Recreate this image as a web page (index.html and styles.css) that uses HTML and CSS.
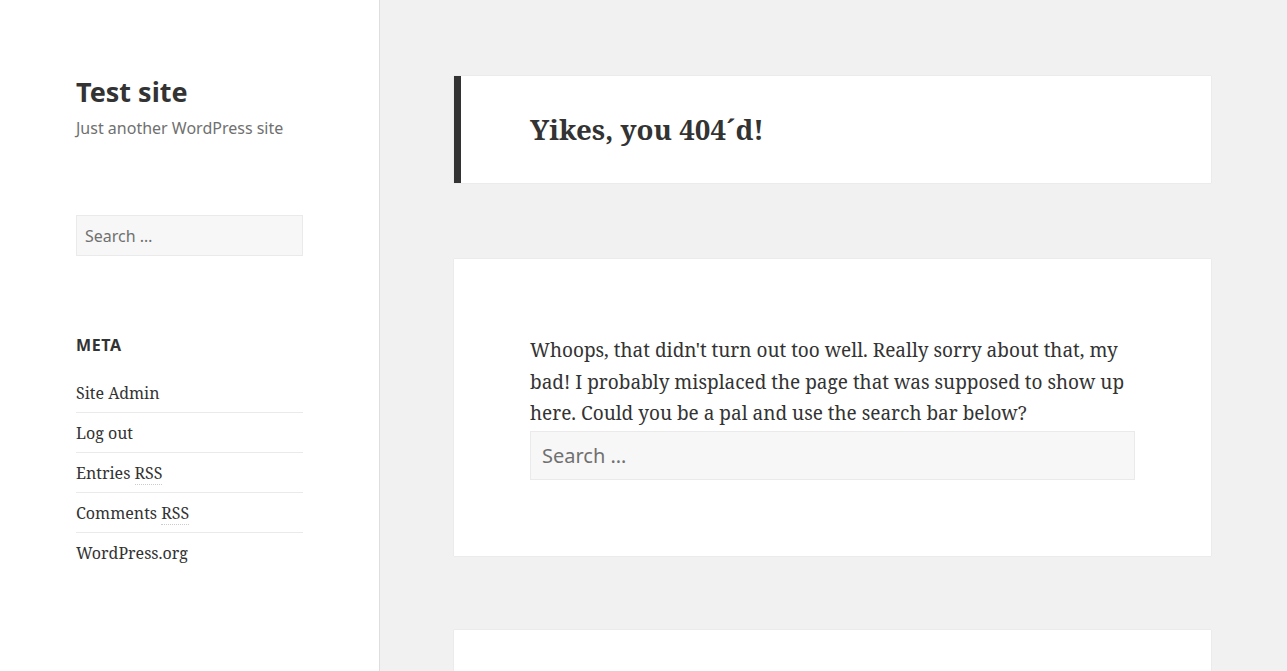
FILE: index.html
```html
<!DOCTYPE html>
<html lang="en">
  <head>
    <title>Page not found – Test site</title>
    <link rel="stylesheet" href="styles.css">
  </head>
  <body>
    <div class="page">

      <!-- Sidebar -->
      <div class="sidebar">
        <h1 class="site-title">Test site</h1>
        <p class="site-description">Just another WordPress site</p>

        <form class="widget widget-search">
          <input type="search" class="search-field" placeholder="Search …">
        </form>

        <div class="widget widget-meta">
          <h2 class="widget-title">Meta</h2>
          <ul class="meta-list">
            <li>Site Admin</li>
            <li>Log out</li>
            <li>Entries <abbr>RSS</abbr></li>
            <li>Comments <abbr>RSS</abbr></li>
            <li>WordPress.org</li>
          </ul>
        </div>
      </div>

      <!-- Main content -->
      <div class="main">
        <header class="page-header">
          <h1 class="page-title">Yikes, you 404´d!</h1>
        </header>

        <div class="page-content">
          <p>Whoops, that didn't turn out too well. Really sorry about that, my bad! I probably misplaced the page that was supposed to show up here. Could you be a pal and use the search bar below?</p>
          <form>
            <input type="search" class="search-field big" placeholder="Search …">
          </form>
        </div>

        <div class="page-content empty"></div>
      </div>

    </div>
  </body>
</html>
```

FILE: styles.css
```css
body { margin: 0; background: #f1f1f1; color: #333; font-family: "Noto Serif", "DejaVu Serif", serif; }

.page { display: flex; height: 671px; overflow: hidden; }

/* Sidebar */
.sidebar {
  width: 380px;
  flex-shrink: 0;
  box-sizing: border-box;
  background: #fff;
  border-right: 1px solid #dedede;
  padding: 72px 76px 0;
}

.site-title {
  margin: 0;
  font-family: "Noto Sans", sans-serif;
  font-size: 27px;
  line-height: 40px;
  font-weight: 700;
}

.site-description {
  margin: 4px 0 0;
  font-family: "Noto Sans", sans-serif;
  font-size: 16px;
  line-height: 24px;
  color: #707070;
}

.widget-search { margin-top: 75px; }

.search-field {
  display: block;
  width: 100%;
  box-sizing: border-box;
  height: 41px;
  padding: 0 8px;
  background: #f7f7f7;
  border: 1px solid #eaeaea;
  border-radius: 0;
  font-family: "Noto Sans", sans-serif;
  font-size: 16px;
  color: #333;
}
.search-field::placeholder { color: #707070; }

.widget-meta { margin-top: 77px; }

.widget-title {
  margin: 0 0 16px;
  font-family: "Noto Sans", sans-serif;
  font-size: 16px;
  line-height: 24px;
  font-weight: 700;
  letter-spacing: 0.04em;
  text-transform: uppercase;
}

.meta-list { list-style: none; margin: 0; padding: 0; }
.meta-list li {
  font-size: 16px;
  line-height: 24px;
  padding: 8px 0 7px;
  border-top: 1px solid #eaeaea;
}
.meta-list li:first-child { border-top: none; }
.meta-list abbr { text-decoration: none; border-bottom: 1px dotted #ccc; }

/* Main */
.main {
  flex: 1;
  padding: 76px 0 0 74px;
}

.page-header,
.page-content {
  width: 757px;
  box-sizing: border-box;
  background: #fff;
  box-shadow: 0 0 1px rgba(0, 0, 0, 0.15);
}

.page-header {
  border-left: 7px solid #333;
  padding: 38px 69px;
}

.page-title {
  margin: 0;
  font-size: 27.7px;
  line-height: 31px;
  font-weight: 700;
}

.page-content {
  margin-top: 76px;
  padding: 76px 76px 76px;
}

.page-content p {
  margin: 0 0 1px;
  font-size: 19px;
  line-height: 31.5px;
}

.search-field.big {
  height: 49px;
  padding: 0 11px;
  font-size: 20px;
}

.page-content.empty { margin-top: 74px; height: 200px; }
```
